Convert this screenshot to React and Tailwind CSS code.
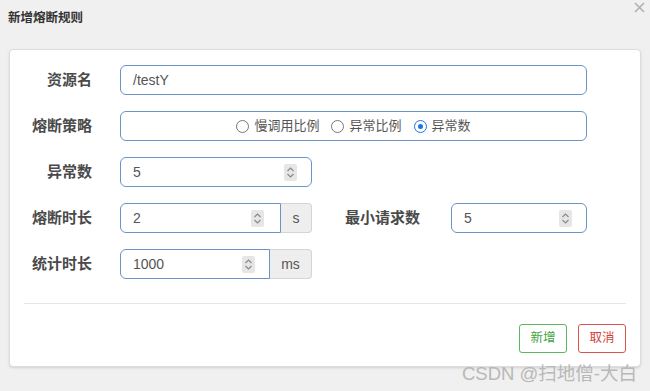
import React from 'react'

const font = { fontFamily: '"Liberation Sans", "Noto Sans CJK SC", sans-serif' }

function Spinner() {
  return (
    <div className="flex h-[17px] w-[13px] flex-col items-center justify-center rounded-[2px] bg-[#e6e6e6]">
      <svg width="9" height="13" viewBox="0 0 9 13" fill="none" stroke="#8a8a8a" strokeWidth="1.2">
        <path d="M1.5 5 L4.5 2 L7.5 5" />
        <path d="M1.5 8 L4.5 11 L7.5 8" />
      </svg>
    </div>
  )
}

function Label({ children, className = '' }) {
  return (
    <div className={`text-right text-[15px] font-bold text-[#4a4a4a] ${className}`}>{children}</div>
  )
}

function NumInput({ value, width, addon, addonWidth, spinnerPad = 'pr-[14px]' }) {
  return (
    <div className="flex h-[30px]" style={{ width }}>
      <div
        className={`flex flex-1 items-center border border-[#6b93c4] bg-white pl-[12px] ${spinnerPad} ${
          addon ? 'rounded-l-[6px]' : 'rounded-[6px]'
        }`}
      >
        <span className="flex-1 text-[14px] text-[#555]">{value}</span>
        <Spinner />
      </div>
      {addon && (
        <div
          className="flex items-center justify-center rounded-r-[4px] border border-l-0 border-[#d4d4d4] bg-[#eeeeee] text-[14px] text-[#555]"
          style={{ width: addonWidth }}
        >
          {addon}
        </div>
      )}
    </div>
  )
}

function Radio({ checked, label }) {
  return (
    <label className="flex items-center gap-[5px] text-[13px] text-[#555]">
      {checked ? (
        <span className="flex h-[13px] w-[13px] items-center justify-center rounded-full border-[1.5px] border-[#1a73e8]">
          <span className="h-[5px] w-[5px] rounded-full bg-[#1a73e8]" />
        </span>
      ) : (
        <span className="h-[13px] w-[13px] rounded-full border border-[#777]" />
      )}
      {label}
    </label>
  )
}

export default function App() {
  return (
    <div className="relative h-[391px] w-[650px] overflow-hidden bg-[#f0f0f0]" style={font}>
      <div className="flex h-[49px] items-start justify-between pl-[8px] pr-[5px]">
        <h1 className="pt-[9px] text-[12.5px] font-bold text-[#333]">新增熔断规则</h1>
        <svg className="mt-[2px]" width="11" height="11" viewBox="0 0 11 11" stroke="#b0b0b0" strokeWidth="1.6">
          <path d="M1 1 L10 10 M10 1 L1 10" />
        </svg>
      </div>

      <div className="mx-[9px] h-[318px] rounded-[4px] border border-[#dddddd] bg-white shadow-sm">
        <div className="flex flex-col gap-[16px] pt-[15px]">
          <div className="flex items-center">
            <Label className="w-[82px]">资源名</Label>
            <div className="ml-[28px] flex h-[30px] w-[467px] items-center rounded-[6px] border border-[#6b93c4] pl-[12px] text-[14px] text-[#555]">
              /testY
            </div>
          </div>

          <div className="flex items-center">
            <Label className="w-[82px]">熔断策略</Label>
            <div className="ml-[28px] flex h-[30px] w-[467px] items-center justify-center gap-[12px] rounded-[6px] border border-[#6b93c4]">
              <Radio label="慢调用比例" />
              <Radio label="异常比例" />
              <Radio checked label="异常数" />
            </div>
          </div>

          <div className="flex items-center">
            <Label className="w-[82px]">异常数</Label>
            <div className="ml-[28px]">
              <NumInput value="5" width={192} />
            </div>
          </div>

          <div className="flex items-center">
            <Label className="w-[82px]">熔断时长</Label>
            <div className="ml-[28px]">
              <NumInput value="2" width={192} addon="s" addonWidth={31} spinnerPad="pr-[16px]" />
            </div>
            <Label className="ml-[30px] w-[78px] text-left">最小请求数</Label>
            <div className="ml-[31px]">
              <NumInput value="5" width={136} />
            </div>
          </div>

          <div className="flex items-center">
            <Label className="w-[82px]">统计时长</Label>
            <div className="ml-[28px]">
              <NumInput value="1000" width={192} addon="ms" addonWidth={42} spinnerPad="pr-[14px]" />
            </div>
          </div>
        </div>

        <div className="mx-[14px] mt-[24px] border-t border-[#e5e5e5]" />

        <div className="flex justify-end gap-[11px] pr-[14px] pt-[20px]">
          <button className="h-[29px] w-[48px] rounded-[3px] border border-[#5cb85c] bg-white text-[12.5px] text-[#3fa33f]">
            新增
          </button>
          <button className="h-[29px] w-[48px] rounded-[3px] border border-[#d9534f] bg-white text-[12.5px] text-[#d43f3a]">
            取消
          </button>
        </div>
      </div>

      <div className="absolute bottom-[3px] right-[13px] text-[18.5px] text-[#b8b8b8]">CSDN @扫地僧-大白</div>
    </div>
  )
}
